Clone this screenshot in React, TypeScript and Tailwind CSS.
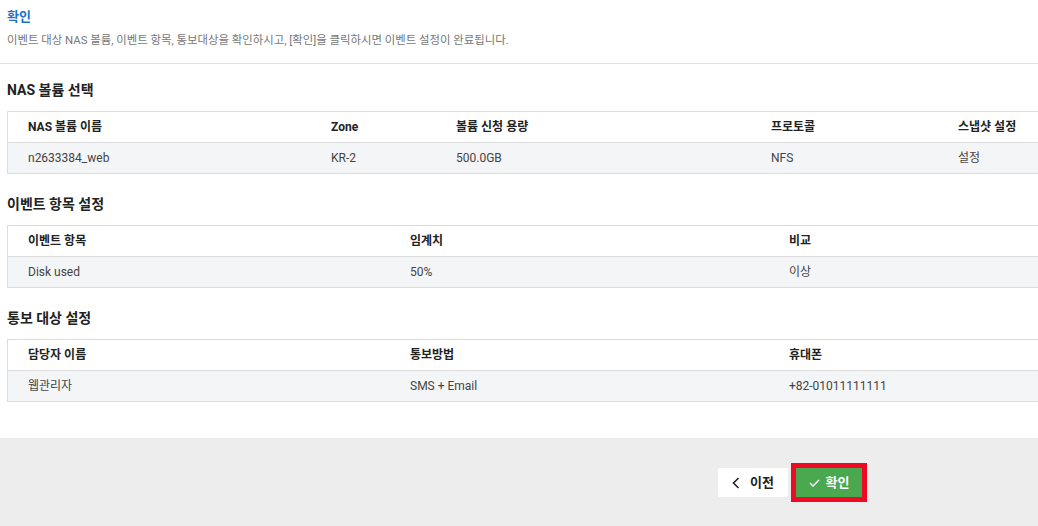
import React from 'react';

type Col = { label: string; width: string };

const nasCols: Col[] = [
  { label: 'NAS 볼륨 이름', width: 'w-[303px]' },
  { label: 'Zone', width: 'w-[125px]' },
  { label: '볼륨 신청 용량', width: 'w-[315px]' },
  { label: '프로토콜', width: 'w-[187px]' },
  { label: '스냅샷 설정', width: 'w-[160px]' },
];

const threeCols = (a: string, b: string, c: string): Col[] => [
  { label: a, width: 'w-[382px]' },
  { label: b, width: 'w-[379px]' },
  { label: c, width: 'w-[382px]' },
];

function Section({ title, cols, row, first }: { title: string; cols: Col[]; row: string[]; first?: boolean }) {
  return (
    <div className={first ? 'mt-[12px]' : 'mt-[16px]'}>
      <h3 className="px-[7px] text-[14px] font-bold text-[#222] leading-[28px]">{title}</h3>
      <div className="ml-[7px] mt-[7px] w-max border border-[#dcdcdc]">
        <div className="flex h-[31px] items-center border-b border-[#dcdcdc] bg-white">
          {cols.map((c) => (
            <div key={c.label} className={`${c.width} pl-[20px] text-[12px] font-bold text-[#222]`}>
              {c.label}
            </div>
          ))}
        </div>
        <div className="flex h-[30px] items-center bg-[#f4f5f7]">
          {cols.map((c, i) => (
            <div key={c.label} className={`${c.width} pl-[20px] text-[12px] text-[#444]`}>
              {row[i]}
            </div>
          ))}
        </div>
      </div>
    </div>
  );
}

export default function App() {
  return (
    <div
      className="w-[1038px] h-[526px] overflow-hidden bg-white flex flex-col"
      style={{ fontFamily: 'Roboto, "Noto Sans CJK KR", sans-serif' }}
    >
      <div className="flex-1">
        <div className="px-[7px] pt-[7px] pb-[14px] border-b border-[#e2e2e2]">
          <h2 className="text-[13px] font-bold text-[#1a73c9] leading-[20px]">확인</h2>
          <p className="mt-[4px] text-[11.4px] text-[#777] leading-[18px]">
            이벤트 대상 NAS 볼륨, 이벤트 항목, 통보대상을 확인하시고, [확인]을 클릭하시면 이벤트 설정이 완료됩니다.
          </p>
        </div>
        <Section first title="NAS 볼륨 선택" cols={nasCols} row={['n2633384_web', 'KR-2', '500.0GB', 'NFS', '설정']} />
        <Section title="이벤트 항목 설정" cols={threeCols('이벤트 항목', '임계치', '비교')} row={['Disk used', '50%', '이상']} />
        <Section title="통보 대상 설정" cols={threeCols('담당자 이름', '통보방법', '휴대폰')} row={['웹관리자', 'SMS + Email', '+82-01011111111']} />
      </div>
      <div className="h-[88px] bg-[#ededed] flex items-start pt-[25px] pl-[718px] gap-[3px]">
        <button className="mt-[5px] h-[29px] w-[70px] rounded-[2px] bg-white flex items-center justify-center gap-[10px] text-[13px] font-bold text-[#222]">
          <svg width="8" height="12" viewBox="0 0 8 12" fill="none" stroke="#222" strokeWidth="1.6">
            <path d="M6.5 1 L1.5 6 L6.5 11" />
          </svg>
          이전
        </button>
        <div className="border-[5px] border-[#ee0a24]">
          <button className="h-[29px] w-[66px] bg-[#4aa84f] flex items-center justify-center gap-[6px] text-[13px] font-bold text-white">
            <svg width="11" height="8" viewBox="0 0 11 8" fill="none" stroke="#fff" strokeWidth="1.4">
              <path d="M1 4 L4 7 L10 1" />
            </svg>
            확인
          </button>
        </div>
      </div>
    </div>
  );
}
